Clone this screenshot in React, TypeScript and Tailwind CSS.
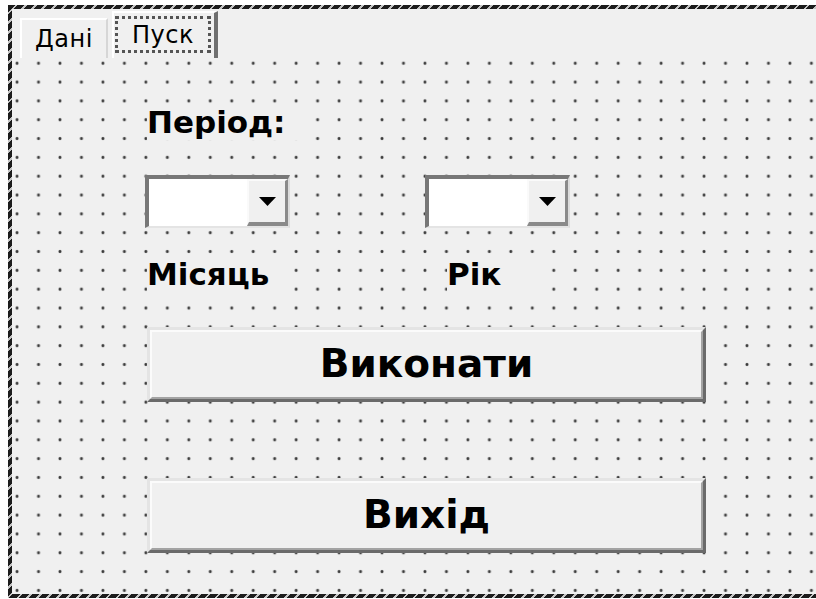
import type { ReactNode } from 'react'

// dotted design grid behind the controls (one dot every 21.47 x 18.84 px)
const gridDots =
  'bg-[radial-gradient(circle,#3a3a3a_1px,rgba(58,58,58,0.4)_1.5px,transparent_2.1px)] bg-size-[21.47px_18.84px] bg-position-[-5.7px_-6.2px]'

function Tab({ label, active }: { label: string; active?: boolean }) {
  if (active) {
    return (
      <div className="flex h-[47px] w-[106px] items-start border-l-2 border-t-2 border-l-white border-t-white border-r-[4px] border-r-[#6f6f6f] bg-[#f0f0f0] pl-[1px] pt-[3px]">
        <div className="flex h-[37px] w-[96px] items-center justify-center border-[3px] border-dotted border-[#555] text-[24px] leading-none tracking-[0.5px] text-black">
          {label}
        </div>
      </div>
    )
  }
  return (
    <div className="mt-[7px] flex h-[40px] w-[88px] items-center justify-center border-l-2 border-t-2 border-r-2 border-l-white border-t-white border-r-[#d6d6d6] bg-[#f0f0f0] text-[24px] leading-none tracking-[0.5px] text-black">
      {label}
    </div>
  )
}

function Combo() {
  return (
    <div className="flex h-[53px] w-[145px] border-l-[4px] border-t-[4px] border-r-[2px] border-b-[2px] border-l-[#777] border-t-[#777] border-r-[#dcdcdc] border-b-[#e4e4e4] bg-white">
      <div className="flex-1" />
      <div className="flex w-[41px] items-center justify-center border-l-2 border-t-2 border-l-[#fafafa] border-t-[#fafafa] border-r-[3px] border-b-[4px] border-r-[#8a8a8a] border-b-[#8a8a8a] bg-[#f0f0f0]">
        <svg width="17" height="9" viewBox="0 0 17 9">
          <path d="M0 0h17L8.5 9z" fill="#000" />
        </svg>
      </div>
    </div>
  )
}

function Label({ children, width }: { children: ReactNode; width: string }) {
  return (
    <div className={`${width} h-[36px] bg-[#f0f0f0] text-[31px] font-bold leading-[36px] text-black`}>
      {children}
    </div>
  )
}

function FormButton({ children }: { children: ReactNode }) {
  return (
    <div className="h-[75px] w-[559px] border-l-[3px] border-t-[3px] border-l-[#e4e4e4] border-t-[#e4e4e4] border-r-[3px] border-b-[3px] border-r-[#6a6a6a] border-b-[#6a6a6a] bg-[#f0f0f0]">
      <div className="flex h-full w-full items-center justify-center border-l-2 border-t-2 border-l-[#fbfbfb] border-t-[#fbfbfb] border-r-2 border-b-2 border-r-[#a3a3a3] border-b-[#a3a3a3] text-[39px] font-bold text-black">
        {children}
      </div>
    </div>
  )
}

export default function App() {
  return (
    <div className="h-[599px] w-[816px] overflow-hidden bg-white font-['DejaVu_Sans',sans-serif]">
      <div className="ml-[8px] mt-[5px] h-[593px] w-[830px] bg-[repeating-linear-gradient(135deg,#1c1c1c_0px,#1c1c1c_5px,#c4c4c4_5px,#c4c4c4_7px)] p-[4px]">
        <div className="flex h-full flex-col bg-[#f0f0f0]">
          {/* tab strip */}
          <div className="flex h-[51px] items-start gap-[4px] pl-[8px] pt-[2px]">
            <Tab label="Дані" />
            <Tab label="Пуск" active />
          </div>

          {/* page with controls */}
          <div className={`flex flex-1 flex-col pl-[135px] ${gridDots}`}>
            <div className="mt-[44px]">
              <Label width="w-[155px]">Період:</Label>
            </div>
            <div className="-ml-[2px] mt-[35px] flex gap-[135px]">
              <Combo />
              <Combo />
            </div>
            <div className="mt-[28px] flex">
              <Label width="w-[145px]">Місяць</Label>
              <div className="ml-[155px]">
                <Label width="w-[100px]">Рік</Label>
              </div>
            </div>
            <div className="mt-[35px]">
              <FormButton>Виконати</FormButton>
            </div>
            <div className="mt-[76px]">
              <FormButton>Вихід</FormButton>
            </div>
          </div>
        </div>
      </div>
    </div>
  )
}
